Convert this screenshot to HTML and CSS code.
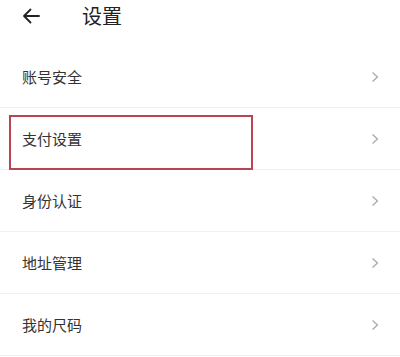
FILE: index.html
```html
<!DOCTYPE html>
<html lang="zh">
<head>
<meta charset="utf-8">
<link rel="stylesheet" href="styles.css">
</head>
<body>
<div class="page">
  <header class="header">
    <svg class="back" width="18" height="16" viewBox="0 0 18 16"><path d="M17 8H2M8.5 1.5L2 8l6.5 6.5" fill="none" stroke="#222" stroke-width="1.8" stroke-linecap="round" stroke-linejoin="round"/></svg>
    <span class="title">设置</span>
  </header>
  <ul class="list">
    <li class="row"><span>账号安全</span><svg class="chev" width="8" height="12" viewBox="0 0 8 12"><path d="M1.5 1.5L6.5 6l-5 4.5" fill="none" stroke="#aaa" stroke-width="1.3" stroke-linejoin="round"/></svg></li>
    <li class="row"><span>支付设置</span><svg class="chev" width="8" height="12" viewBox="0 0 8 12"><path d="M1.5 1.5L6.5 6l-5 4.5" fill="none" stroke="#aaa" stroke-width="1.3" stroke-linejoin="round"/></svg><div class="highlight"></div></li>
    <li class="row"><span>身份认证</span><svg class="chev" width="8" height="12" viewBox="0 0 8 12"><path d="M1.5 1.5L6.5 6l-5 4.5" fill="none" stroke="#aaa" stroke-width="1.3" stroke-linejoin="round"/></svg></li>
    <li class="row"><span>地址管理</span><svg class="chev" width="8" height="12" viewBox="0 0 8 12"><path d="M1.5 1.5L6.5 6l-5 4.5" fill="none" stroke="#aaa" stroke-width="1.3" stroke-linejoin="round"/></svg></li>
    <li class="row"><span>我的尺码</span><svg class="chev" width="8" height="12" viewBox="0 0 8 12"><path d="M1.5 1.5L6.5 6l-5 4.5" fill="none" stroke="#aaa" stroke-width="1.3" stroke-linejoin="round"/></svg></li>
  </ul>
</div>
</body>
</html>
```
FILE: styles.css
```css
html, body {
  margin: 0;
  padding: 0;
  background: #fff;
}
body {
  font-family: "Noto Sans CJK SC", "Noto Sans", sans-serif;
  color: #333;
  width: 400px;
  height: 357px;
  overflow: hidden;
}
.header {
  height: 46px;
  display: flex;
  align-items: flex-start;
  padding: 6px 0 0 22px;
  box-sizing: border-box;
}
.back {
  display: block;
  margin-top: 2px;
}
.title {
  margin-left: 42px;
  font-size: 20px;
  color: #222;
  line-height: 20px;
}
.list {
  list-style: none;
  margin: 0;
  padding: 0;
}
.row {
  position: relative;
  height: 62px;
  box-sizing: border-box;
  border-bottom: 1px solid #f1f1f1;
  display: flex;
  align-items: center;
  justify-content: space-between;
  padding: 0 21px 0 22px;
  font-size: 15px;
  color: #333;
}
.chev {
  display: block;
}
.highlight {
  position: absolute;
  left: 9px;
  top: 7px;
  width: 244px;
  height: 55px;
  box-sizing: border-box;
  border: 2px solid #b84552;
}
```
